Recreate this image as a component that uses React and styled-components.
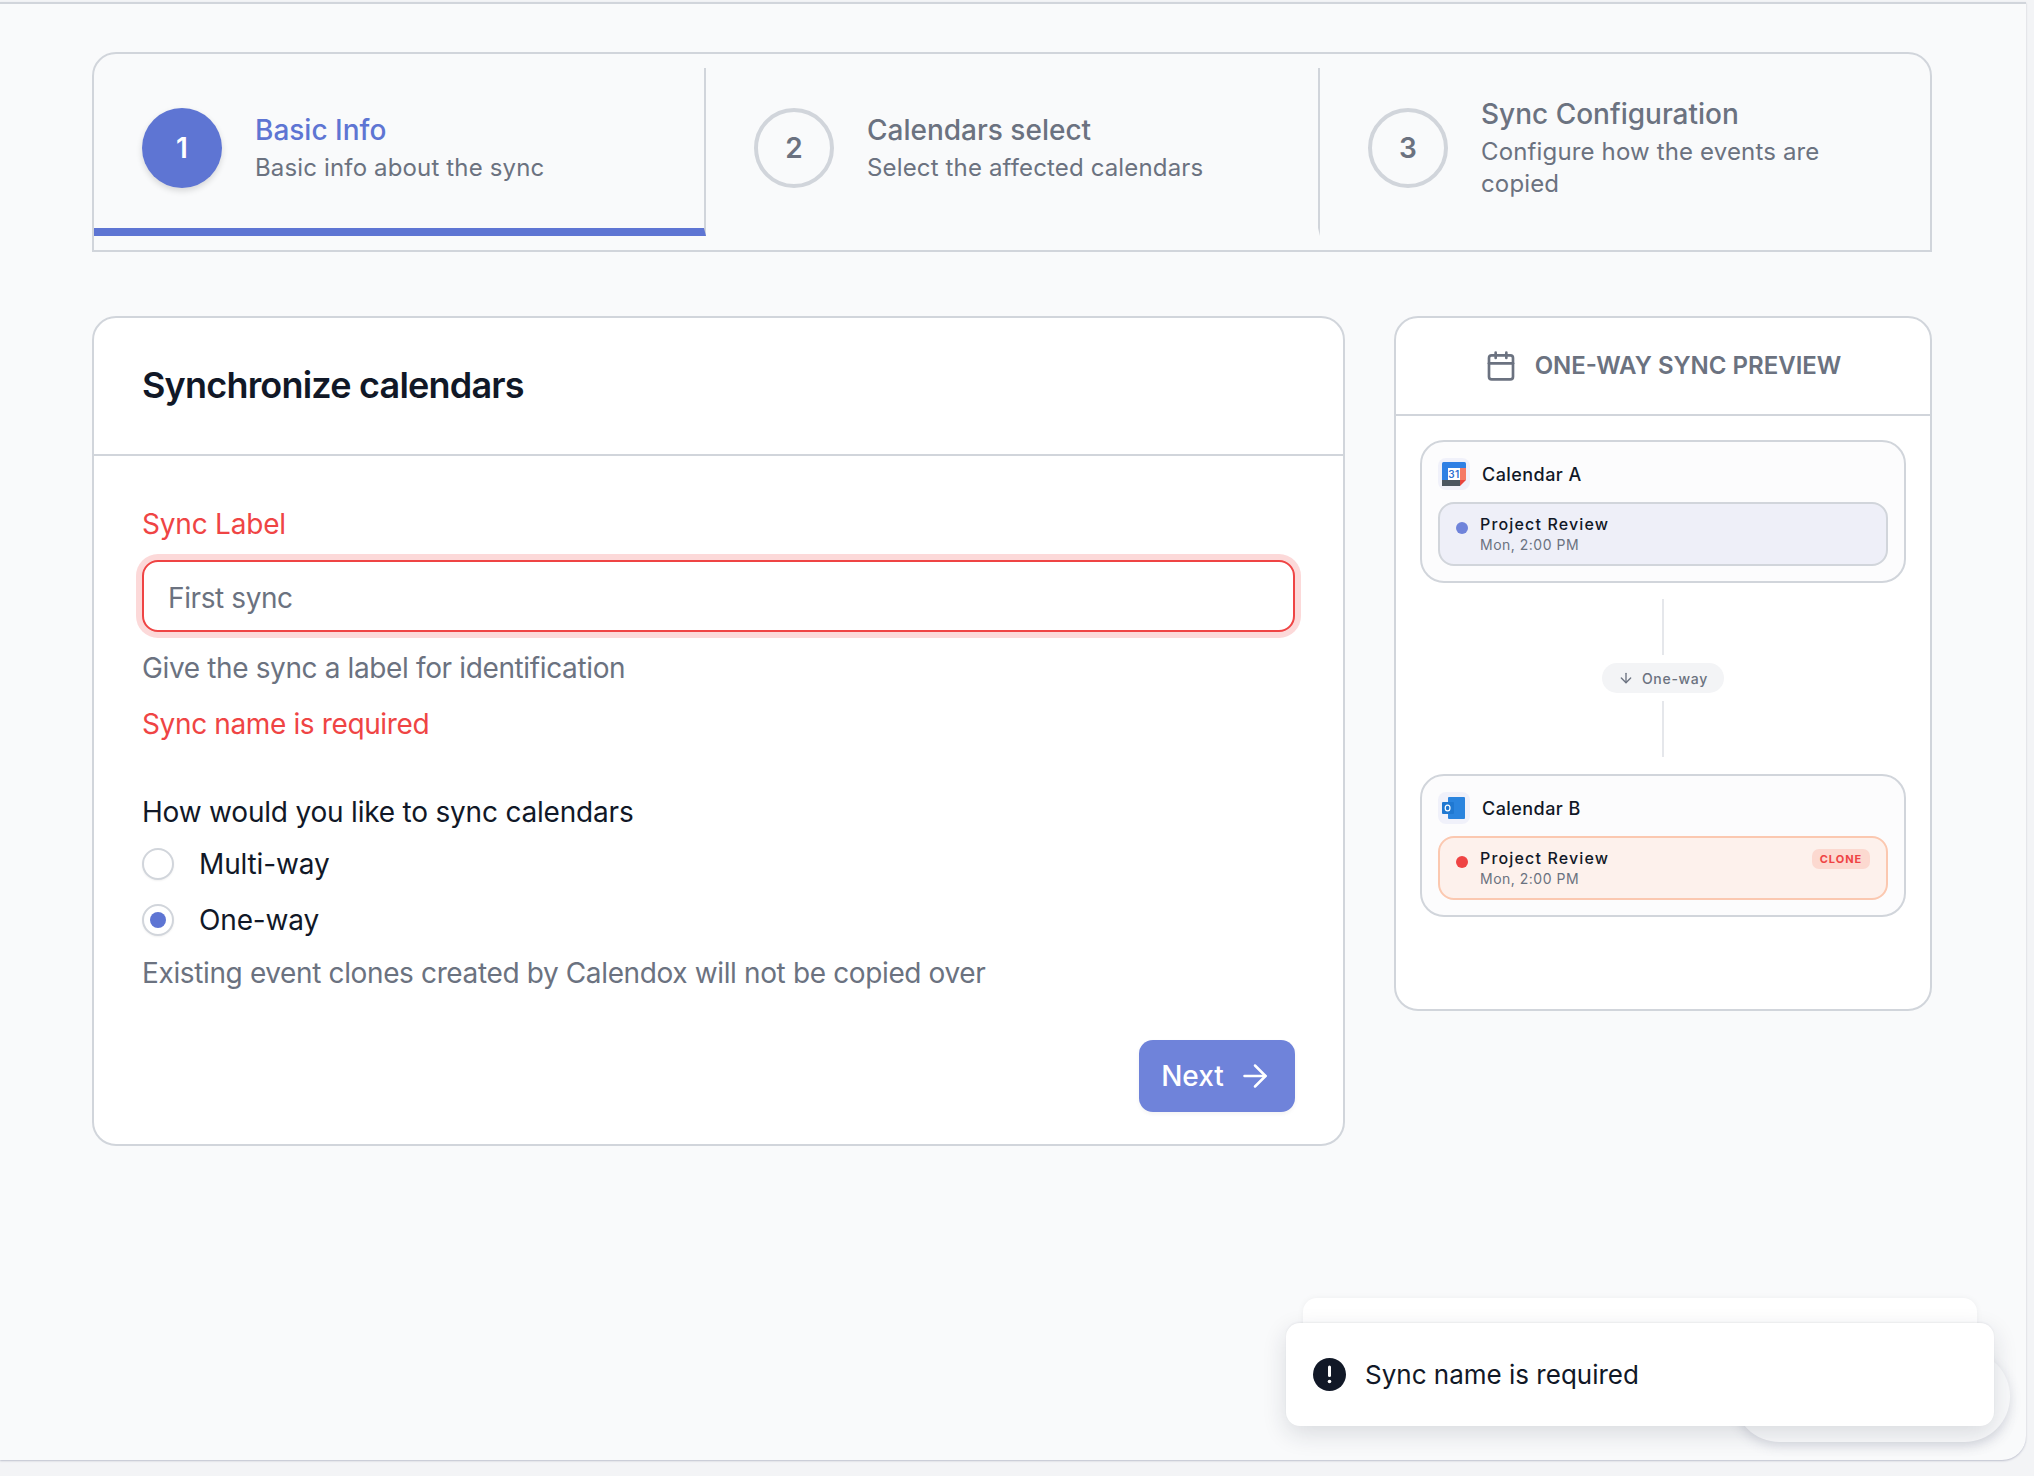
import React from "react";
import styled, { createGlobalStyle } from "styled-components";
import { ArrowRight, ArrowDown, Calendar } from "lucide-react";

const GlobalStyle = createGlobalStyle`
  * { box-sizing: border-box; }
  html, body { margin: 0; padding: 0; height: 100%; }
  body {
    background: #f3f4f6;
    font-family: Inter, "Liberation Sans", sans-serif;
    color: #111827;
    overflow: hidden;
  }
`;

const Shell = styled.div`
  position: relative;
  margin-top: 2px;
  width: 2026px;
  height: 1458px;
  padding: 48px 94px 0 92px;
  background: #f9fafb;
  border-top: 2px solid #d1d5db;
  border-bottom-right-radius: 24px;
  box-shadow: 0 1px 2px rgba(90, 95, 130, 0.35);
`;

const Stepper = styled.div`
  display: grid;
  grid-template-columns: 612px 614px 1fr;
  padding: 14px 0;
  height: 200px;
  border: 2px solid #d1d5db;
  border-radius: 24px 24px 0 0;
`;

const Step = styled.div`
  display: flex;
  align-items: center;
  gap: 33px;
  padding-left: 48px;
  padding-right: 48px;
  border-bottom: 8px solid ${(p) => (p.$active ? "#5e75d3" : "transparent")};
  border-right: ${(p) => (p.$last ? "0" : "2px solid #d1d5db")};
`;

const StepCircle = styled.div`
  flex: none;
  width: 80px;
  height: 80px;
  border-radius: 50%;
  display: flex;
  align-items: center;
  justify-content: center;
  font-size: 28px;
  font-weight: 600;
  color: ${(p) => (p.$active ? "#fff" : "#6b7280")};
  background: ${(p) => (p.$active ? "#5e75d3" : "transparent")};
  border: ${(p) => (p.$active ? "0" : "4px solid #d1d5db")};
  box-shadow: ${(p) => (p.$active ? "0 3px 6px rgba(0,0,0,.14)" : "none")};
`;

const StepText = styled.div`
  display: flex;
  flex-direction: column;
  gap: 4px;
`;

const StepTitle = styled.div`
  font-size: 28px;
  line-height: 36px;
  font-weight: 500;
  color: ${(p) => (p.$active ? "#5e75d3" : "#6b7280")};
`;

const StepSub = styled.div`
  font-size: 24px;
  line-height: 32px;
  letter-spacing: 0.15px;
  color: #6b7280;
`;

const Columns = styled.div`
  display: grid;
  grid-template-columns: 1253px 538px;
  gap: 49px;
  align-items: start;
  margin-top: 64px;
`;

const Card = styled.section`
  background: #fff;
  border: 2px solid #d1d5db;
  border-radius: 24px;
`;

const CardHeader = styled.div`
  height: 138px;
  padding: 0 48px 2px;
  display: flex;
  align-items: center;
  border-bottom: 2px solid #d1d5db;
`;

const Heading = styled.h1`
  margin: 0;
  font-size: 36px;
  line-height: 48px;
  font-weight: 600;
  letter-spacing: -0.8px;
  color: #111827;
`;

const FormBody = styled.form`
  padding: 48px 48px 32px;
  display: flex;
  flex-direction: column;
`;

const FieldLabel = styled.label`
  font-size: 28px;
  line-height: 40px;
  font-weight: 400;
  letter-spacing: -0.2px;
  color: ${(p) => (p.$error ? "#ef4444" : "#111827")};
  margin-top: ${(p) => p.$mt || 0}px;
`;

const TextInput = styled.input`
  display: block;
  width: 100%;
  height: 72px;
  margin-top: 16px;
  padding: 3px 24px 0;
  font: inherit;
  font-size: 28px;
  letter-spacing: -0.4px;
  color: #111827;
  background: #fff;
  border: 2px solid #ef4444;
  border-radius: 16px;
  outline: none;
  box-shadow: 0 0 0 6px #fcd9d9;
  &::placeholder { color: #6b7280; opacity: 1; }
`;

const Hint = styled.p`
  margin: ${(p) => p.$mt || 16}px 0 0;
  font-size: 28px;
  line-height: 40px;
  letter-spacing: -0.37px;
  color: ${(p) => (p.$error ? "#ef4444" : "#6b7280")};
`;

const RadioRow = styled.label`
  display: flex;
  align-items: center;
  gap: 25px;
  height: 40px;
  margin-top: ${(p) => p.$mt}px;
  font-size: 28px;
  line-height: 40px;
  letter-spacing: -0.15px;
  color: #111827;
`;

const RadioDot = styled.span`
  flex: none;
  width: 32px;
  height: 32px;
  border-radius: 50%;
  background: #fff;
  border: 2px solid #d1d5db;
  box-shadow: 0 1px 2px rgba(0, 0, 0, 0.06);
  display: flex;
  align-items: center;
  justify-content: center;
  &::after {
    content: "";
    display: ${(p) => (p.$checked ? "block" : "none")};
    width: 16px;
    height: 16px;
    border-radius: 50%;
    background: #5e75d3;
  }
`;

const Actions = styled.div`
  display: flex;
  justify-content: flex-end;
  margin-top: 47px;
`;

const NextButton = styled.button`
  display: flex;
  align-items: center;
  justify-content: center;
  gap: 13px;
  width: 156px;
  height: 72px;
  border: 0;
  border-radius: 14px;
  background: #6f83da;
  color: #fff;
  font: inherit;
  font-size: 28px;
  font-weight: 500;
  box-shadow: 0 2px 4px rgba(0, 0, 0, 0.05);
`;

const PreviewHeader = styled.div`
  height: 98px;
  display: flex;
  align-items: center;
  justify-content: center;
  gap: 18px;
  border-bottom: 2px solid #d1d5db;
  color: #6b7280;
  font-size: 24px;
  line-height: 32px;
  font-weight: 600;
  text-transform: uppercase;
`;

const PreviewBody = styled.div`
  padding: 24px 24px 92px;
  display: flex;
  flex-direction: column;
  align-items: stretch;
`;

const CalendarBox = styled.div`
  background: #fcfcfd;
  border: 2px solid #d1d5db;
  border-radius: 24px;
  padding: 16px 16px 15px;
`;

const CalendarHead = styled.div`
  display: flex;
  align-items: center;
  gap: 12px;
  height: 32px;
  font-size: 18px;
  font-weight: 500;
  letter-spacing: 0.45px;
  color: #111827;
`;

const IconTile = styled.span`
  flex: none;
  width: 32px;
  height: 32px;
  border-radius: 8px;
  background: #f0f1fa;
  display: flex;
  align-items: center;
  justify-content: center;
`;

const EventRow = styled.div`
  margin-top: 12px;
  height: 64px;
  padding: 0 16px;
  display: flex;
  align-items: flex-start;
  gap: 12px;
  border-radius: 16px;
  border: 2px solid ${(p) => (p.$clone ? "#fbc8b0" : "#d1d5db")};
  background: ${(p) => (p.$clone ? "#fdf1ec" : "#eeeff8")};
`;

const EventDot = styled.span`
  flex: none;
  width: 12px;
  height: 12px;
  margin-top: 18px;
  border-radius: 50%;
  background: ${(p) => (p.$clone ? "#ef4444" : "#6f83da")};
`;

const EventText = styled.div`
  flex: 1;
  padding-top: 8px;
`;

const EventTitle = styled.div`
  font-size: 16px;
  line-height: 24px;
  font-weight: 500;
  letter-spacing: 1.15px;
  color: #111827;
`;

const EventTime = styled.div`
  font-size: 14px;
  line-height: 18px;
  letter-spacing: 0.5px;
  color: #6b7280;
`;

const CloneBadge = styled.span`
  margin-top: 11px;
  width: 58px;
  height: 20px;
  border-radius: 7px;
  background: #fcd9d0;
  color: #ef4444;
  font-size: 11px;
  font-weight: 700;
  letter-spacing: 1px;
  display: flex;
  align-items: center;
  justify-content: center;
`;

const Connector = styled.div`
  display: flex;
  flex-direction: column;
  align-items: center;
  padding: 16px 0 17px;
  gap: 8px;
`;

const ConnectorLine = styled.span`
  width: 2px;
  height: 56px;
  background: #e5e7eb;
`;

const DirectionPill = styled.span`
  width: 122px;
  height: 30px;
  border-radius: 15px;
  background: #f3f4f6;
  color: #6b7280;
  font-size: 14px;
  font-weight: 500;
  letter-spacing: 0.7px;
  display: flex;
  align-items: center;
  justify-content: center;
  gap: 8px;
`;

const HelpBubble = styled.div`
  position: absolute;
  left: 1734px;
  top: 1347px;
  width: 276px;
  height: 91px;
  border-radius: 46px;
  background: #f9fafb;
  box-shadow: 0 4px 12px rgba(70, 75, 110, 0.18);
`;

const ToastBack = styled.div`
  position: absolute;
  left: 1303px;
  top: 1294px;
  width: 674px;
  height: 40px;
  background: #fff;
  border-radius: 14px;
  box-shadow: 0 0 6px rgba(0, 0, 0, 0.05);
`;

const Toast = styled.div`
  position: absolute;
  left: 1286px;
  top: 1319px;
  width: 708px;
  height: 103px;
  padding: 0 27px;
  display: flex;
  align-items: center;
  gap: 19px;
  background: #fff;
  border-radius: 14px;
  font-size: 26px;
  color: #111827;
  box-shadow: 0 8px 24px rgba(30, 35, 60, 0.14), 0 -1px 2px rgba(30, 35, 60, 0.06);
`;

const GoogleCalendarIcon = () => (
  <svg width="24" height="24" viewBox="0 0 24 24">
    <rect x="0" y="0" width="24" height="7" fill="#2f80e4" rx="1.5" />
    <rect x="0" y="2" width="6" height="18" fill="#2f80e4" />
    <rect x="0" y="18" width="18" height="6" fill="#4a5560" />
    <rect x="18" y="6" width="6" height="12" fill="#f57a66" />
    <path d="M18 24 L24 18 L18 18 Z" fill="#e8453c" />
    <rect x="6" y="6" width="12" height="12" fill="#fff" />
    <text x="12" y="16" textAnchor="middle" fontSize="10" fontWeight="600" fill="#2f6fd0" fontFamily="Inter, sans-serif">31</text>
  </svg>
);

const OutlookIcon = () => (
  <svg width="24" height="24" viewBox="0 0 24 24">
    <rect x="6" y="1" width="17" height="22" rx="1" fill="#2a84de" />
    <rect x="0" y="6" width="12" height="12" rx="1" fill="#1f78d1" />
    <ellipse cx="5.6" cy="12" rx="2.4" ry="2.9" fill="none" stroke="#fff" strokeWidth="1.2" />
  </svg>
);

const AlertIcon = () => (
  <svg width="33" height="33" viewBox="0 0 33 33">
    <circle cx="16.5" cy="16.5" r="16.5" fill="#111827" />
    <rect x="15" y="7.5" width="3" height="11.5" rx="1.5" fill="#fff" />
    <circle cx="16.5" cy="23.5" r="1.8" fill="#fff" />
  </svg>
);

const steps = [
  { n: 1, title: "Basic Info", sub: "Basic info about the sync" },
  { n: 2, title: "Calendars select", sub: "Select the affected calendars" },
  { n: 3, title: "Sync Configuration", sub: "Configure how the events are copied" },
];

const CalendarCard = ({ name, icon, clone }) => (
  <CalendarBox>
    <CalendarHead>
      <IconTile>{icon}</IconTile>
      {name}
    </CalendarHead>
    <EventRow $clone={clone}>
      <EventDot $clone={clone} />
      <EventText>
        <EventTitle>Project Review</EventTitle>
        <EventTime>Mon, 2:00 PM</EventTime>
      </EventText>
      {clone && <CloneBadge>CLONE</CloneBadge>}
    </EventRow>
  </CalendarBox>
);

export default function App() {
  return (
    <>
      <GlobalStyle />
      <Shell>
        <Stepper>
          {steps.map((s, i) => (
            <Step key={s.n} $active={i === 0} $last={i === 2}>
              <StepCircle $active={i === 0}>{s.n}</StepCircle>
              <StepText>
                <StepTitle $active={i === 0}>{s.title}</StepTitle>
                <StepSub>{s.sub}</StepSub>
              </StepText>
            </Step>
          ))}
        </Stepper>
        <Columns>
          <Card>
            <CardHeader>
              <Heading>Synchronize calendars</Heading>
            </CardHeader>
            <FormBody>
              <FieldLabel $error>Sync Label</FieldLabel>
              <TextInput placeholder="First sync" />
              <Hint>Give the sync a label for identification</Hint>
              <Hint $error>Sync name is required</Hint>
              <FieldLabel $mt={48}>How would you like to sync calendars</FieldLabel>
              <RadioRow $mt={12}>
                <RadioDot />
                Multi-way
              </RadioRow>
              <RadioRow $mt={16}>
                <RadioDot $checked />
                One-way
              </RadioRow>
              <Hint $mt={13}>Existing event clones created by Calendox will not be copied over</Hint>
              <Actions>
                <NextButton type="button">
                  Next
                  <ArrowRight size={36} strokeWidth={1.7} />
                </NextButton>
              </Actions>
            </FormBody>
          </Card>
          <Card>
            <PreviewHeader>
              <Calendar size={32} strokeWidth={2} />
              One-way sync preview
            </PreviewHeader>
            <PreviewBody>
              <CalendarCard name="Calendar A" icon={<GoogleCalendarIcon />} />
              <Connector>
                <ConnectorLine />
                <DirectionPill>
                  <ArrowDown size={16} strokeWidth={2} />
                  One-way
                </DirectionPill>
                <ConnectorLine />
              </Connector>
              <CalendarCard name="Calendar B" icon={<OutlookIcon />} clone />
            </PreviewBody>
          </Card>
        </Columns>
        <HelpBubble />
        <ToastBack />
        <Toast>
          <AlertIcon />
          Sync name is required
        </Toast>
      </Shell>
    </>
  );
}
